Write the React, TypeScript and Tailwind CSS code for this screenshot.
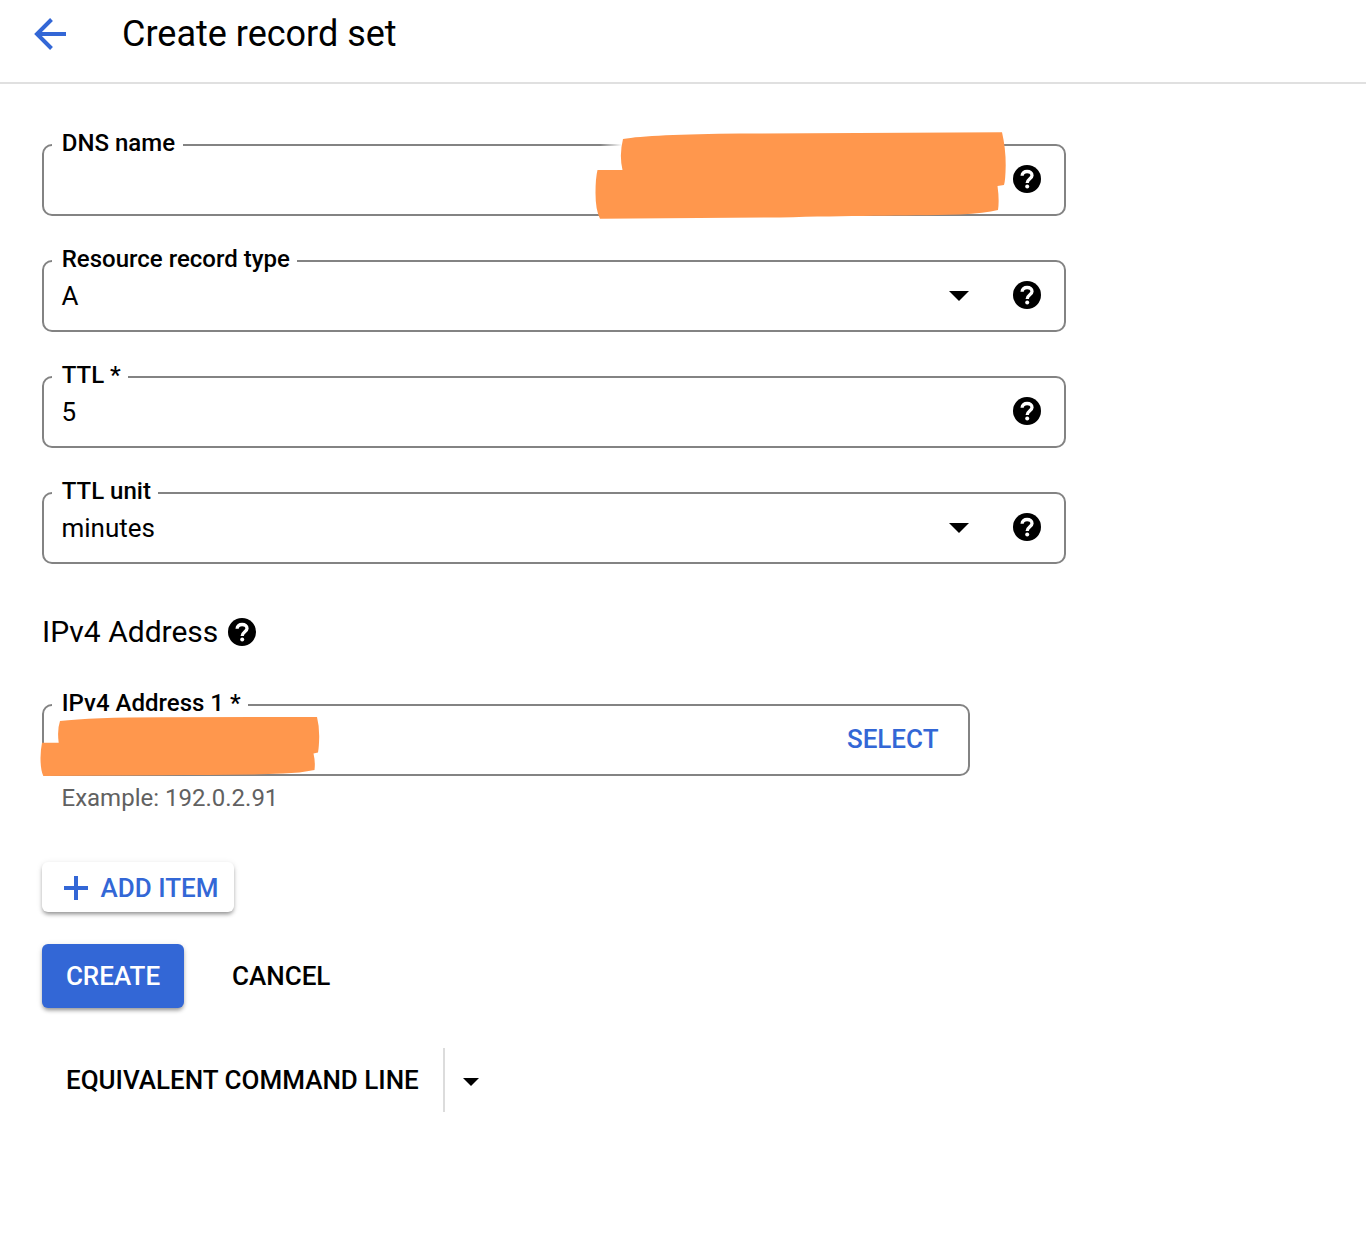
import type { ReactNode } from "react";

function HelpIcon({ className = "" }: { className?: string }) {
  return (
    <svg className={`block size-7 shrink-0 ${className}`} viewBox="0 0 28 28" fill="none" aria-label="Help">
      <circle cx="14" cy="14" r="14" fill="black" />
      <path
        d="M9.1 10.8C9.1 8 11.4 6.5 14.1 6.5C17 6.5 19 8.1 19 10.5C19 13.7 14.2 13.9 14.2 18"
        stroke="white"
        strokeWidth="3.3"
      />
      <circle cx="14.2" cy="21.6" r="2" fill="white" />
    </svg>
  );
}

function Caret({ className }: { className: string }) {
  return (
    <svg className={`block shrink-0 ${className}`} viewBox="0 0 20 10" fill="black">
      <path d="M0 0h20L10 10z" />
    </svg>
  );
}

function Field({
  label,
  width = "w-[1024px]",
  padRight = "pr-[23px]",
  value = "",
  cover,
  children,
}: {
  label: string;
  width?: string;
  padRight?: string;
  value?: string;
  cover?: ReactNode;
  children: ReactNode;
}) {
  return (
    <div
      className={`relative flex h-[72px] items-center rounded-[10px] border-2 border-[#838383] pl-[17.5px] ${padRight} ${width}`}
    >
      <span className="absolute left-2 -top-[19px] whitespace-nowrap bg-white pl-[9.75px] pr-[7.5px] text-[24px] leading-8 font-medium">
        {label}
      </span>
      <span className="grow pb-px text-[26px] leading-9">{value}</span>
      {cover}
      {children}
    </div>
  );
}

export default function App() {
  return (
    <div className="min-h-[1242px] w-full bg-white font-['Roboto',sans-serif] text-black">
      <header className="flex h-[84px] items-start border-b-2 border-[#e0e0e0] pl-[34px]">
        <svg className="mt-[18px] block size-8 shrink-0" viewBox="0 0 32 32" fill="none" stroke="#3367d6" strokeWidth="4">
          <path d="M32 16H3M17.5 1.5L3 16l14.5 14.5" />
        </svg>
        <h1 className="ml-14 mt-[10px] text-[36px] leading-[48px]">Create record set</h1>
      </header>

      <main className="flex flex-col items-start px-[42px] pt-[60px]">
        <div className="flex flex-col gap-11">
          <Field
            label="DNS name"
            cover={
              <svg className="absolute left-[546px] -top-4 h-[92px] w-[420px]" viewBox="590 130 420 92">
                <defs>
                  <linearGradient id="fade">
                    <stop offset="0" stopColor="white" stopOpacity="0" />
                    <stop offset="1" stopColor="white" />
                  </linearGradient>
                </defs>
                <rect x="600" y="143" width="22" height="4" fill="url(#fade)" />
                <path
                  fill="#ff974d"
                  d="M623 139Q650 134.3 740 133.5L1002 132.3Q1005.7 148 1005.7 165Q1005.5 180 1004 185L997.5 186Q999.5 200 998 210Q985 213 960 214.5C900 216 850 215.5 780 217.5L600 218.7Q595.5 210 595.5 193Q595.5 178 597.5 170H622.5Q619 155 623 139Z"
                />
              </svg>
            }
          >
            <HelpIcon className="mb-0.5" />
          </Field>
          <Field label="Resource record type" value="A">
            <Caret className="mr-11 h-[10px] w-5" />
            <HelpIcon className="mb-0.5" />
          </Field>
          <Field label="TTL *" value="5">
            <HelpIcon className="mb-0.5" />
          </Field>
          <Field label="TTL unit" value="minutes">
            <Caret className="mr-11 h-[10px] w-5" />
            <HelpIcon className="mb-0.5" />
          </Field>
        </div>

        <h2 className="mt-12 flex h-10 items-center gap-[10px] text-[30px]">
          <span className="pb-0.5">IPv4 Address</span> <HelpIcon />
        </h2>

        <div className="mt-[52px]">
          <Field
            label="IPv4 Address 1 *"
            width="w-[928px]"
            padRight="pr-[29.5px]"
            cover={
              <svg className="absolute -left-1 top-[9px] h-[64px] w-[282px]" viewBox="40 715 282 64">
                <path
                  fill="#ff974d"
                  d="M60 721Q90 717.5 163 717.3L317 717Q319.3 726 319.2 737Q319 747 318 752.5L313.5 753.5Q315.5 762 314.5 770Q300 773 283 773.5C240 775.5 200 774.5 163 775.3L43.3 776Q40.5 770 40.5 758Q40.7 749 42 742.7H58.7Q57 730 60 721Z"
                />
              </svg>
            }
          >
            <button className="mb-0.5 text-[26px] leading-9 font-medium text-[#3367d6]">SELECT</button>
          </Field>
          <p className="mt-1.5 pl-[19.5px] text-[24px] leading-8 text-[#616161]">Example: 192.0.2.91</p>
        </div>

        <button className="mt-12 flex h-[50px] w-[192px] items-center rounded-md pl-[22px] text-[26px] font-medium text-[#3367d6] shadow-[0_3px_4px_-1px_rgba(0,0,0,0.4),0_1px_6px_rgba(0,0,0,0.1)]">
          <svg className="mr-[12.5px] mt-0.5 block size-6 shrink-0" viewBox="0 0 24 24" stroke="#3367d6" strokeWidth="4">
            <path d="M12 0v24M0 12h24" />
          </svg>
          <span className="whitespace-nowrap pt-0.5">ADD ITEM</span>
        </button>

        <div className="mt-8 flex items-center text-[26px] font-medium">
          <button className="h-16 w-[142px] rounded-md bg-[#3367d6] text-white shadow-[0_3px_4px_-1px_rgba(0,0,0,0.4),0_1px_6px_rgba(0,0,0,0.1)]">
            CREATE
          </button>
          <button className="ml-12">CANCEL</button>
        </div>

        <div className="mt-10 flex h-16 items-center pl-6 text-[26px] font-medium">
          <span className="w-[377px] whitespace-nowrap">EQUIVALENT COMMAND LINE</span>
          <span className="h-16 w-0.5 bg-[#dcdcdc]" />
          <Caret className="ml-[18px] mt-1 h-2 w-4" />
        </div>
      </main>
    </div>
  );
}
